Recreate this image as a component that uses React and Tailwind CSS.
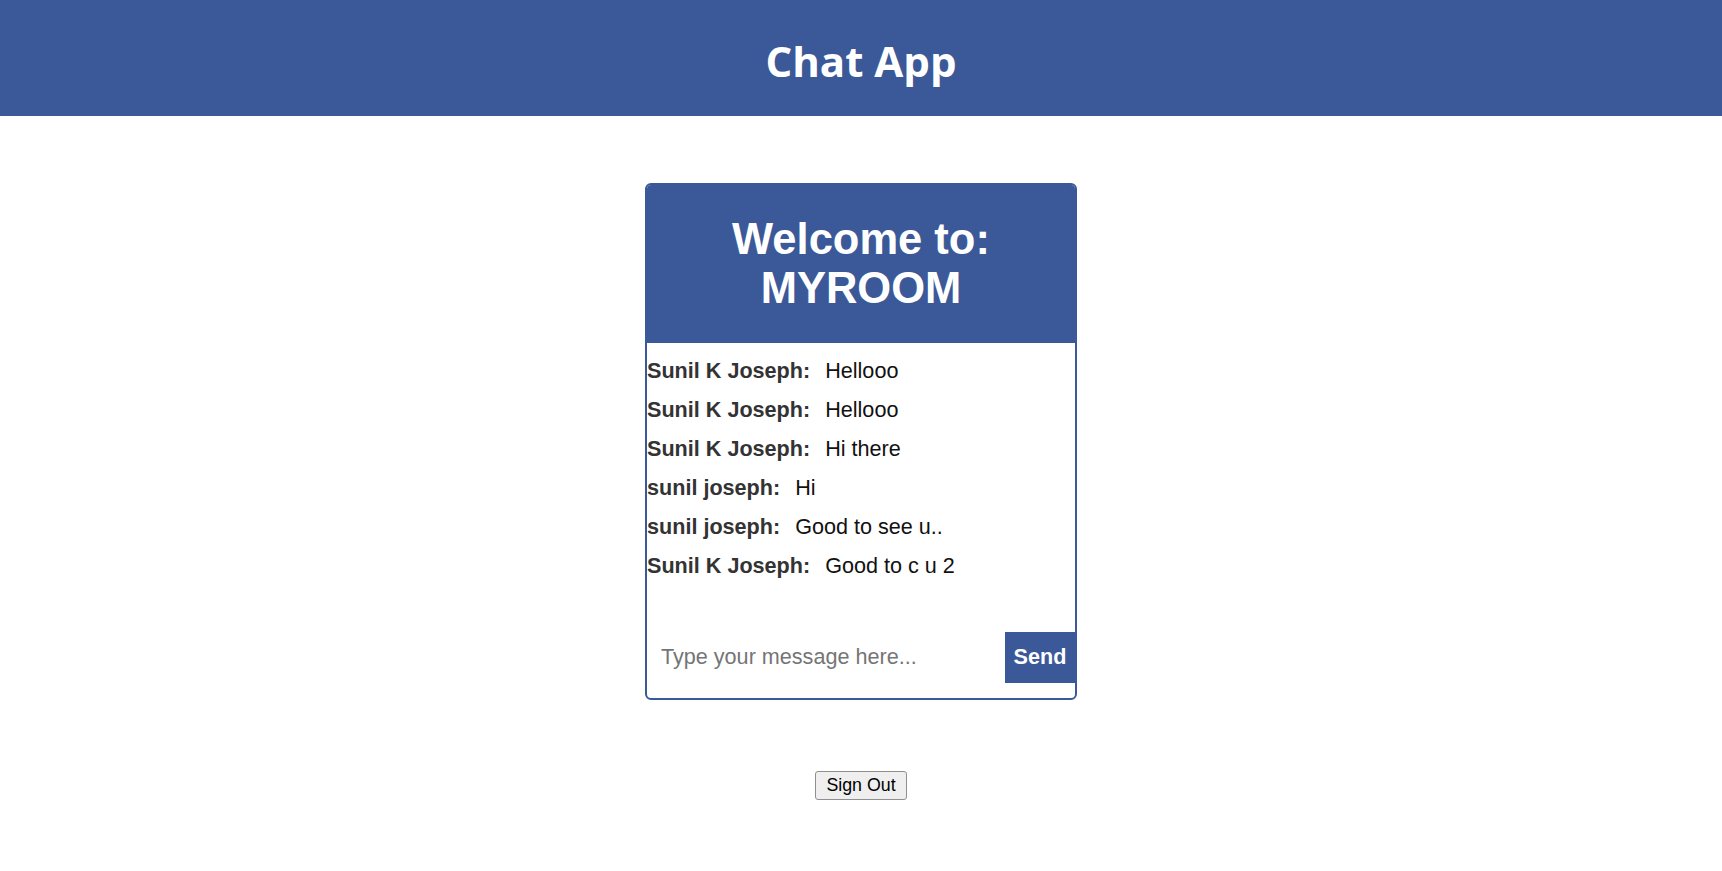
import React from "react";

const messages = [
  { name: "Sunil K Joseph:", text: "Hellooo" },
  { name: "Sunil K Joseph:", text: "Hellooo" },
  { name: "Sunil K Joseph:", text: "Hi there" },
  { name: "sunil joseph:", text: "Hi" },
  { name: "sunil joseph:", text: "Good to see u.." },
  { name: "Sunil K Joseph:", text: "Good to c u 2" },
];

export default function App() {
  return (
    <div className="min-h-[871px] bg-white" style={{ fontFamily: '"Liberation Sans", Arial, sans-serif' }}>
      <header className="h-[116px] bg-[#3b5998] flex items-center justify-center">
        <h1
          className="text-white font-bold text-[42px] leading-none pt-[6px]"
          style={{ fontFamily: '"Open Sans", "Noto Sans", sans-serif' }}
        >
          Chat App
        </h1>
      </header>

      <div className="flex flex-col items-center pt-[67px]">
        <div className="w-[432px] h-[517px] border-2 border-[#3b5998] rounded-[6px] overflow-hidden flex flex-col">
          <div className="h-[158px] bg-[#3b5998] flex flex-col items-center justify-center text-white font-bold text-[43.5px] leading-[49px] pb-[1px]">
            <div>Welcome to:</div>
            <div>MYROOM</div>
          </div>
          <div className="flex-1 flex flex-col pt-[9px]">
            {messages.map((m, i) => (
              <div key={i} className="h-[39px] flex items-center text-[21.6px]">
                <span className="font-bold text-[#333]">{m.name}</span>
                <span className="ml-[15px] text-[#111]">{m.text}</span>
              </div>
            ))}
          </div>
          <div className="flex items-stretch h-[51px] mb-[15px]">
            <input
              className="flex-1 min-w-0 outline-none pl-[14px] text-[21.6px] text-[#111] placeholder:text-[#757575]"
              placeholder="Type your message here..."
            />
            <button className="w-[70px] bg-[#3b5998] text-white font-bold text-[21.6px]">Send</button>
          </div>
        </div>

        <button className="mt-[71px] h-[29px] px-[10px] bg-[#efefef] border border-[#8f8f8f] rounded-[3px] text-[17.8px] text-black leading-none">
          Sign Out
        </button>
      </div>
    </div>
  );
}
